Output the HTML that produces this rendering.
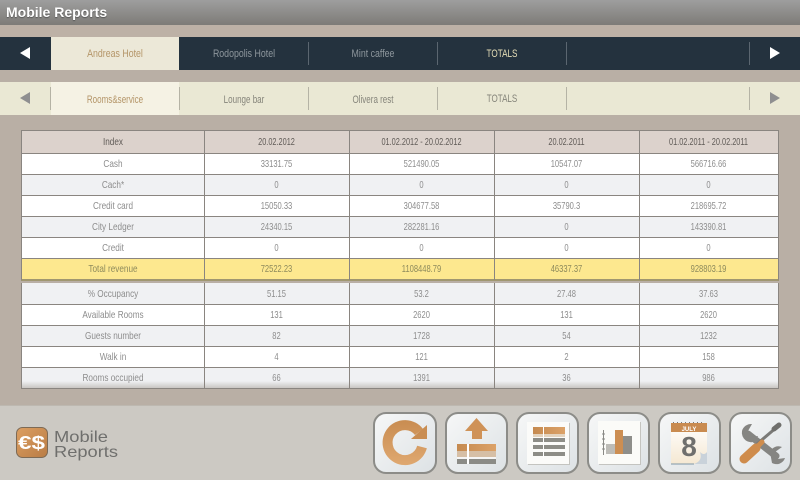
<!DOCTYPE html>
<html><head><meta charset="utf-8"><style>
*{box-sizing:border-box;margin:0;padding:0}
html,body{width:800px;height:480px;overflow:hidden;background:#b9afa5}
body{position:relative;font-family:"Liberation Sans",sans-serif;font-size:11px}
.a{position:absolute}
#hd{left:0;top:0;width:800px;height:25px;background:linear-gradient(#9e9e9e,#7d7b77);color:#fff;font:bold 14px/24px "Liberation Sans",sans-serif;padding-left:6px;text-shadow:0 1px 1px #555}
#band{left:0;top:25px;width:800px;height:12px;background:#bdb1a6}
.bar{left:0;width:800px;height:33px}
.t{position:absolute;width:128px;text-align:center;line-height:34px;height:33px;white-space:nowrap}
.n .t{transform:scaleX(.8)}
.m .t{transform:scaleX(.73)}
.s{position:absolute;width:1px;top:5px;height:23px}
.r{position:absolute;left:21px;width:758px;display:flex;border-left:1px solid #8a8580;border-right:1px solid #8a8580;border-bottom:1px solid #8a8580;color:#8d8d8d;text-align:center;font-size:10.5px}
.r div{display:flex;align-items:center;justify-content:center;height:100%;white-space:nowrap;transform:scaleX(.72)}
.r div:nth-child(1){width:182px;transform:scaleX(.78)}.r div:nth-child(2),.r div:nth-child(3),.r div:nth-child(4){width:145px}.r div:nth-child(5){flex:1}
.w{background:#fff}.g{background:#f0f1f3}
.h{background:#dcd2cc;color:#5f5a56;border-top:1px solid #8a8580}
.h div{transform:scaleX(.7)}
.y{background:#fde88f;color:#8d8a5c;border-bottom:2px solid #a09770!important}
.v{position:absolute;width:1px;background:#8a8580}
#ft{left:0;top:405px;width:800px;height:75px;background:#ccc9c3;border-top:1px solid #bdb8b0}
.b{position:absolute;top:412px;width:63px;height:62px;border:2px solid #8c8c88;border-radius:13px;background:linear-gradient(135deg,#f6f7f7,#dde2e5)}
svg.i{position:absolute;left:0;top:0;width:800px;height:480px}
</style></head><body>
<div class="a" id="hd">Mobile Reports</div>
<div class="a" id="band"></div>

<div class="a bar n" style="top:37px;background:#24323e;color:#8e979d">
<svg class="a" style="left:0;top:0" width="800" height="33"><path d="M20 16 L30 10 V22Z M780 16 L770 10 V22Z" fill="#fff"/></svg>
<div class="a" style="left:51px;top:0;width:128px;height:33px;background:#ece8d8"></div>
<div class="t" style="left:51px;color:#b49568">Andreas Hotel</div>
<div class="t" style="left:180px">Rodopolis Hotel</div>
<div class="t" style="left:309px">Mint caffee</div>
<div class="t" style="left:438px;color:#e6dfb8;transform:scaleX(.74)">TOTALS</div>
<i class="s" style="left:308px;background:#5b6670"></i><i class="s" style="left:437px;background:#5b6670"></i><i class="s" style="left:566px;background:#5b6670"></i><i class="s" style="left:749px;background:#5b6670"></i>
</div>

<div class="a bar m" style="top:82px;background:#eae8d4;color:#85847a">
<svg class="a" style="left:0;top:0" width="800" height="33"><path d="M20 16 L30 10 V22Z M780 16 L770 10 V22Z" fill="#8f8f90"/></svg>
<div class="a" style="left:51px;top:0;width:128px;height:33px;background:#f5f2e4"></div>
<div class="t" style="left:51px;top:.5px;color:#b49568">Rooms&amp;service</div>
<div class="t" style="left:180px;top:.5px">Lounge bar</div>
<div class="t" style="left:309px;top:.5px">Olivera rest</div>
<div class="t" style="left:438px;top:-.5px">TOTALS</div>
<i class="s" style="left:50px;background:#b5b3a5"></i><i class="s" style="left:179px;background:#b5b3a5"></i><i class="s" style="left:308px;background:#b5b3a5"></i><i class="s" style="left:437px;background:#b5b3a5"></i><i class="s" style="left:566px;background:#b5b3a5"></i><i class="s" style="left:749px;background:#b5b3a5"></i>
</div>

<div class="r h" style="top:130px;height:24px"><div>Index</div><div>20.02.2012</div><div>01.02.2012 - 20.02.2012</div><div>20.02.2011</div><div>01.02.2011 - 20.02.2011</div></div>
<div class="r w" style="top:154px;height:21px"><div>Cash</div><div>33131.75</div><div>521490.05</div><div>10547.07</div><div>566716.66</div></div>
<div class="r g" style="top:175px;height:21px"><div>Cach*</div><div>0</div><div>0</div><div>0</div><div>0</div></div>
<div class="r w" style="top:196px;height:21px"><div>Credit card</div><div>15050.33</div><div>304677.58</div><div>35790.3</div><div>218695.72</div></div>
<div class="r g" style="top:217px;height:21px"><div>City Ledger</div><div>24340.15</div><div>282281.16</div><div>0</div><div>143390.81</div></div>
<div class="r w" style="top:238px;height:21px"><div>Credit</div><div>0</div><div>0</div><div>0</div><div>0</div></div>
<div class="r y" style="top:259px;height:22px"><div>Total revenue</div><div>72522.23</div><div>1108448.79</div><div>46337.37</div><div>928803.19</div></div>

<div class="r g" style="top:283px;height:22px"><div>% Occupancy</div><div>51.15</div><div>53.2</div><div>27.48</div><div>37.63</div></div>
<div class="r w" style="top:305px;height:21px"><div>Available Rooms</div><div>131</div><div>2620</div><div>131</div><div>2620</div></div>
<div class="r g" style="top:326px;height:21px"><div>Guests number</div><div>82</div><div>1728</div><div>54</div><div>1232</div></div>
<div class="r w" style="top:347px;height:21px"><div>Walk in</div><div>4</div><div>121</div><div>2</div><div>158</div></div>
<div class="r g" style="top:368px;height:21px;background:linear-gradient(#f0f1f3 65%,#c9c6c2)"><div>Rooms occupied</div><div>66</div><div>1391</div><div>36</div><div>986</div></div>

<i class="v" style="left:204px;top:130px;height:150px"></i><i class="v" style="left:349px;top:130px;height:150px"></i><i class="v" style="left:494px;top:130px;height:150px"></i><i class="v" style="left:639px;top:130px;height:150px"></i>
<i class="v" style="left:204px;top:283px;height:105px"></i><i class="v" style="left:349px;top:283px;height:105px"></i><i class="v" style="left:494px;top:283px;height:105px"></i><i class="v" style="left:639px;top:283px;height:105px"></i>

<div class="a" id="ft"></div>
<div class="b" style="left:373px;width:64px"></div><div class="b" style="left:445px"></div><div class="b" style="left:516px"></div><div class="b" style="left:587px"></div><div class="b" style="left:658px"></div><div class="b" style="left:729px"></div>

<svg class="i" viewBox="0 0 800 480">
<defs>
<linearGradient id="o" x1="0" x2="1" y1="0" y2="0"><stop offset="0" stop-color="#c58a50"/><stop offset="1" stop-color="#dca268"/></linearGradient>
<linearGradient id="o2" gradientUnits="userSpaceOnUse" x1="383" y1="421" x2="383" y2="465"><stop offset="0" stop-color="#c98d52"/><stop offset="1" stop-color="#dfa870"/></linearGradient>
<linearGradient id="lg" x1="0" x2="1" y1="0" y2="1"><stop offset="0" stop-color="#dc9f62"/><stop offset="1" stop-color="#b97c45"/></linearGradient>
<linearGradient id="cal" x1="0" x2="0" y1="0" y2="1"><stop offset="0" stop-color="#fff"/><stop offset="1" stop-color="#f5e8d2"/></linearGradient>
</defs>

<!-- logo -->
<rect x="16.5" y="427.5" width="31" height="30" rx="6" fill="url(#lg)" stroke="#7d6a55"/>
<text x="18" y="449" font-family="Liberation Sans" font-weight="bold" font-size="18" fill="#fff" textLength="27" lengthAdjust="spacingAndGlyphs">€$</text>
<text x="54" y="442" font-family="Liberation Sans" font-size="16" fill="#6f6f6d" textLength="54" lengthAdjust="spacingAndGlyphs">Mobile</text>
<text x="54" y="457" font-family="Liberation Sans" font-size="16" fill="#6f6f6d" textLength="64" lengthAdjust="spacingAndGlyphs">Reports</text>

<!-- refresh -->
<path d="M419 432 A17.5 17.5 0 1 0 422 447" fill="none" stroke="url(#o2)" stroke-width="10"/>
<path d="M427 425 V439 H411Z" fill="#c98d52"/>

<!-- upload -->
<path d="M476.5 418 L488 431 H482 V439 H472 V431 H465Z" fill="#cf9257"/>
<rect x="457" y="444" width="39" height="7" fill="url(#o)"/>
<rect x="457" y="451" width="39" height="6" fill="#d6bfa6"/>
<rect x="457" y="457" width="39" height="2" fill="#f5f5f5"/>
<rect x="457" y="459" width="39" height="5" fill="#8b8b86"/>
<rect x="467" y="444" width="2" height="20" fill="#fff"/>

<!-- table -->
<rect x="528" y="423" width="42" height="42" fill="#c4c4c0"/>
<rect x="527" y="422" width="42" height="42" fill="#fbfbf9"/>
<rect x="533" y="427" width="32" height="7" fill="url(#o)"/>
<rect x="533" y="434" width="32" height="3" fill="#e4d4bf"/>
<rect x="533" y="438" width="32" height="4" fill="#8d8d87"/>
<rect x="533" y="445" width="32" height="4" fill="#8d8d87"/>
<rect x="533" y="452" width="32" height="4" fill="#8d8d87"/>
<rect x="543" y="427" width="1" height="31" fill="#fff"/>

<!-- chart -->
<rect x="599" y="422" width="42" height="43" fill="#c4c4c0"/>
<rect x="598" y="421" width="42" height="43" fill="#fbfbf8"/>
<path d="M603.5 430 V455 M602 434 h3 M602 439 h3 M602 444 h3 M602 449 h3" stroke="#8a8a86" fill="none"/>
<rect x="606" y="444" width="9" height="10" fill="#bdbcb7"/>
<rect x="615" y="430" width="8" height="24" fill="#cc8e52"/>
<rect x="623" y="436" width="9" height="18" fill="#8e8e8a"/>

<!-- calendar -->
<rect x="671" y="423" width="36" height="41" fill="url(#cal)"/>
<rect x="671" y="423" width="36" height="9" fill="#c98b50"/>
<path d="M673 422.5 H705" stroke="#777" stroke-dasharray="1 3"/>
<text x="689" y="431" text-anchor="middle" font-family="Liberation Sans" font-weight="bold" font-size="6" fill="#fff">JULY</text>
<text x="689" y="456" text-anchor="middle" font-family="Liberation Sans" font-weight="bold" font-size="28" fill="#6f6f6d">8</text>
<path d="M694 464 Q703 461 700 452 Q704 456 707 452 L707 464Z" fill="#c9d2da"/>
<path d="M671 464 H694" stroke="#7f97a8"/>

<!-- tools -->
<path d="M748 434 L776 456" stroke="#858582" stroke-width="7" stroke-linecap="round"/>
<path d="M742 431 A9.5 9.5 0 0 0 756 441 L758 436 L752 437 L748 431 L752 424 A9.5 9.5 0 0 0 742 431Z" fill="#858582"/>
<path d="M770 452 A9 9 0 0 1 782 447 L775 452 L778 459 L785 458 A9 9 0 0 1 772 463 Z" fill="#858582"/>
<path d="M777 427 L757 444" stroke="#7a7a77" stroke-width="3" stroke-linecap="round"/>
<path d="M779 425 L774 429" stroke="#6f6f6c" stroke-width="5" stroke-linecap="round"/>
<path d="M744 459 L756 448" stroke="#cf8c4c" stroke-width="9" stroke-linecap="round"/>
<path d="M755 449 L762 442" stroke="#cf8c4c" stroke-width="5" stroke-linecap="round"/>
</svg>
</body></html>
